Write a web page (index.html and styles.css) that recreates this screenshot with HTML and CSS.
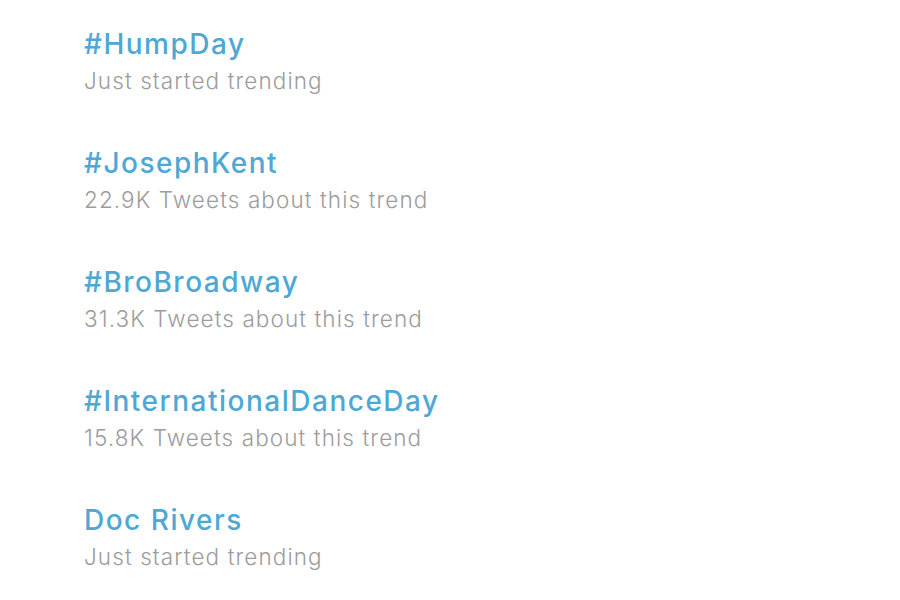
FILE: index.html
```html
<!DOCTYPE html>
<html>
    <head>
        <meta charset="UTF-8">
        <meta name="viewport" content="width=device-width, initial-scale=1.0">
        <link rel="stylesheet" href="styles.css">
        <title>Trends</title>
    </head>
    <body>
        <ul id="trends">
            <li class="trend">
                <div class="name">#HumpDay</div>
                <div class="meta">Just started trending</div>
            </li>
            <li class="trend">
                <div class="name">#JosephKent</div>
                <div class="meta">22.9K Tweets about this trend</div>
            </li>
            <li class="trend">
                <div class="name">#BroBroadway</div>
                <div class="meta">31.3K Tweets about this trend</div>
            </li>
            <li class="trend">
                <div class="name">#InternationalDanceDay</div>
                <div class="meta">15.8K Tweets about this trend</div>
            </li>
            <li class="trend">
                <div class="name">Doc Rivers</div>
                <div class="meta">Just started trending</div>
            </li>
        </ul>
    </body>
</html>
```

FILE: styles.css
```css
body {
    margin: 0;
    padding: 0;
    background: #fff;
    font-family: Inter, "Liberation Sans", Arial, sans-serif;
    overflow: hidden;
}

#trends {
    list-style: none;
    margin: 0;
    padding: 26px 0 0 84px;
}

.trend {
    height: 119px;
}

.name {
    font-size: 28px;
    line-height: 36px;
    font-weight: 500;
    letter-spacing: 1.5px;
    color: #4ea8d5;
}

.meta {
    font-size: 22.5px;
    line-height: 38px;
    font-weight: 300;
    letter-spacing: 1.1px;
    color: #9c9c9c;
}
```
